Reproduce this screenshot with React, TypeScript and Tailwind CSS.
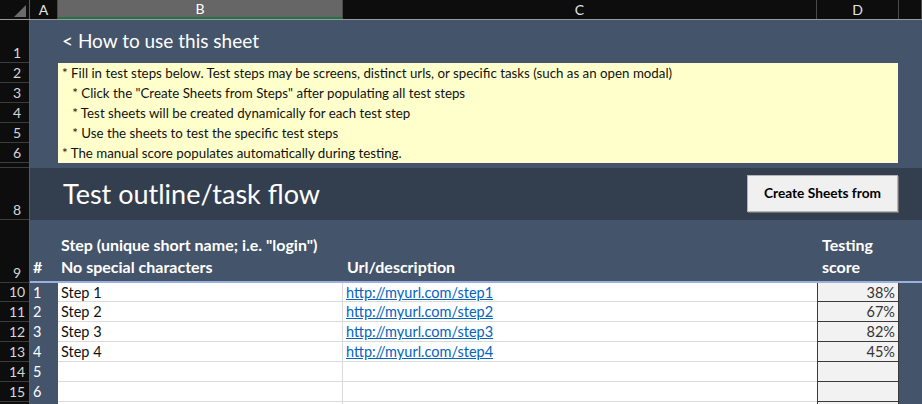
const FONT = "font-['Lato','Liberation_Sans',sans-serif]"

const COLS = [
  { key: 'A', w: 'w-[28px]' },
  { key: 'B', w: 'w-[285px]' },
  { key: 'C', w: 'w-[474px]' },
  { key: 'D', w: 'w-[82px]' },
  { key: 'E', w: 'w-[23px]' },
]

// row number, height class
const ROW_HEADS: [string, string][] = [
  ['1', 'h-[43px]'],
  ['2', 'h-[20px]'],
  ['3', 'h-[20px]'],
  ['4', 'h-[20px]'],
  ['5', 'h-[20px]'],
  ['6', 'h-[20px]'],
  ['', 'h-[5px]'],
  ['8', 'h-[52px]'],
  ['9', 'h-[63px]'],
  ['10', 'h-[19px]'],
  ['11', 'h-[20px]'],
  ['12', 'h-[20px]'],
  ['13', 'h-[20px]'],
  ['14', 'h-[20px]'],
  ['15', 'h-[20px]'],
  ['', 'h-[20px]'],
]

const NOTES = [
  '* Fill in test steps below. Test steps may be screens, distinct urls, or specific tasks (such as an open modal)',
  '   * Click the "Create Sheets from Steps" after populating all test steps',
  '   * Test sheets will be created dynamically for each test step',
  '   * Use the sheets to test the specific test steps',
  '* The manual score populates automatically during testing.',
]

const STEPS = [
  { n: '1', name: 'Step 1', url: 'http://myurl.com/step1', score: '38%' },
  { n: '2', name: 'Step 2', url: 'http://myurl.com/step2', score: '67%' },
  { n: '3', name: 'Step 3', url: 'http://myurl.com/step3', score: '82%' },
  { n: '4', name: 'Step 4', url: 'http://myurl.com/step4', score: '45%' },
  { n: '5', name: '', url: '', score: '' },
  { n: '6', name: '', url: '', score: '' },
  { n: '', name: '', url: '', score: '' },
]

export default function App() {
  return (
    <div className={`w-[922px] h-[404px] overflow-hidden bg-[#44546a] ${FONT}`}>
      <ColumnHeader />
      <div className="flex">
        {/* Row numbers */}
        <div className="w-[30px] shrink-0 flex flex-col bg-[#0d0d0d] border-r border-[#5c5c5c]">
          {ROW_HEADS.map(([n, h], i) => (
            <div
              key={i}
              className={`${h} shrink-0 flex items-end justify-center pl-[5px] border-b border-[#3d3d3d] text-[14px] leading-[16px] text-[#d6d6d6] pb-[1px] overflow-hidden`}
            >
              {n}
            </div>
          ))}
        </div>

        <div className="w-[892px] flex flex-col">
          {/* Row 1 */}
          <div className="h-[43px] flex items-end pl-[32px] pb-[11px]">
            <span className="text-[19px] leading-[22px] text-white">&lt; How to use this sheet</span>
          </div>

          {/* Rows 2-6: notes box */}
          <div className="h-[100px] flex">
            <div className="w-[28px]" />
            <div className="w-[840px] bg-[#ffffcc] flex flex-col">
              {NOTES.map((line) => (
                <div key={line} className="h-[20px] leading-[20px] px-[4px] text-[13.3px] text-[#111] whitespace-pre">
                  {line}
                </div>
              ))}
            </div>
          </div>

          {/* Row 7 */}
          <div className="h-[5px]" />

          {/* Row 8 */}
          <div className="h-[52px] bg-[#333f4f] flex justify-between pl-[33px] pr-[24px]">
            <span className="text-[27px] leading-[30px] text-white pt-[11px]">Test outline/task flow</span>
            <button className="mt-[7px] h-[37px] w-[151px] bg-[#f0f0f0] border border-[#b4b4b4] shadow-[1px_1px_0_#707070] text-[13.7px] font-bold text-black">
              Create Sheets from
            </button>
          </div>

          {/* Row 9: headers */}
          <div className="h-[63px] flex items-end border-b-2 border-[#9bb0dc] text-[16px] font-bold text-white leading-[22px] pb-[3px]">
            <div className="w-[28px] pl-[3px]">#</div>
            <div className="w-[285px] pl-[3px]">
              <div>Step (unique short name; i.e. "login")</div>
              <div>No special characters</div>
            </div>
            <div className="w-[474px] pl-[4px]">Url/description</div>
            <div className="w-[82px] pl-[5px]">
              <div>Testing</div>
              <div>score</div>
            </div>
          </div>

          {/* Data rows */}
          {STEPS.map((s, i) => (
            <div key={i} className={`${i === 0 ? 'h-[19px]' : 'h-[20px]'} flex text-[14.5px] leading-[19px]`}>
              <div className="w-[28px] pl-[3px] text-white">{s.n}</div>
              <div className="w-[285px] bg-white border-b border-r border-[#dadada] pl-[3px] text-[#111]">{s.name}</div>
              <div className="w-[474px] bg-white border-b border-[#dadada] pl-[3px]">
                {s.url && <span className="text-[#0563c1] underline">{s.url}</span>}
              </div>
              <div className="w-[82px] bg-[#f2f2f2] border-l border-r border-b border-[#3a3a3a] text-right pr-[3px] text-[#333]">
                {s.score}
              </div>
              <div className="w-[23px]" />
            </div>
          ))}
        </div>
      </div>
    </div>
  )
}

function ColumnHeader() {
  return (
    <div className="h-[20px] flex bg-[#0d0d0d] border-b border-[#9a9a9a]">
      <div className="w-[30px] shrink-0 border-r border-[#5c5c5c] flex items-end justify-end pr-[3px] pb-[2px]">
        <svg width="12" height="12" viewBox="0 0 12 12">
          <polygon points="12,0 12,12 0,12" fill="#6b6b6b" />
        </svg>
      </div>
      {COLS.map((c) => (
        <div
          key={c.key}
          className={`${c.w} shrink-0 flex items-center justify-center text-[14px] leading-[19px] border-r border-[#4a4a4a] ${
            c.key === 'B' ? 'bg-[#666666] text-white border-b-2 border-b-[#217346]' : 'text-[#e4e4e4]'
          }`}
        >
          {c.key === 'E' ? '' : c.key}
        </div>
      ))}
    </div>
  )
}
